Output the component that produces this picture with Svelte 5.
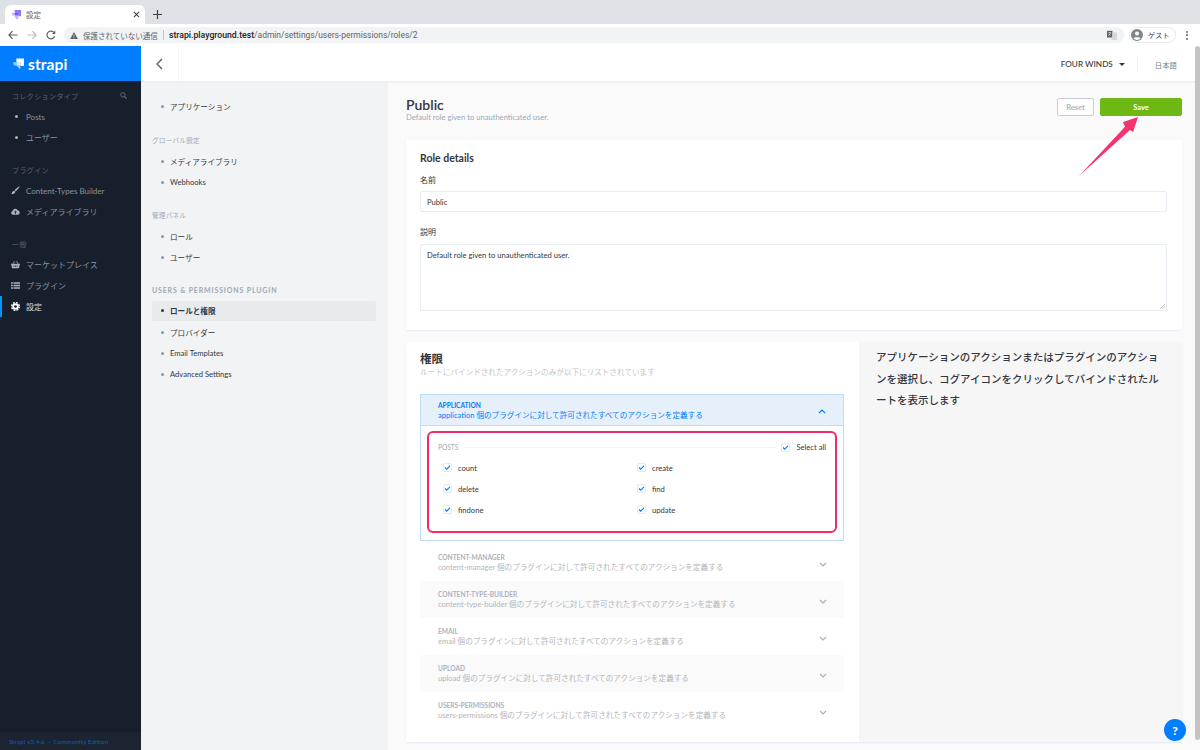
<script lang="ts">
    const sideSections = [
        { label: "コレクションタイプ", search: true, items: [
            { icon: "dot", text: "Posts" },
            { icon: "dot", text: "ユーザー" },
        ]},
        { label: "プラグイン", items: [
            { icon: "brush", text: "Content-Types Builder" },
            { icon: "cloud", text: "メディアライブラリ" },
        ]},
        { label: "一般", items: [
            { icon: "basket", text: "マーケットプレイス" },
            { icon: "list", text: "プラグイン" },
            { icon: "cog", text: "設定", active: true },
        ]},
    ];

    const navSections = [
        { items: [{ text: "アプリケーション" }] },
        { label: "グローバル設定", items: [{ text: "メディアライブラリ" }, { text: "Webhooks" }] },
        { label: "管理パネル", items: [{ text: "ロール" }, { text: "ユーザー" }] },
        { label: "USERS & PERMISSIONS PLUGIN", strong: true, items: [
            { text: "ロールと権限", active: true },
            { text: "プロバイダー" },
            { text: "Email Templates" },
            { text: "Advanced Settings" },
        ]},
    ];

    const actions = ["count", "create", "delete", "find", "findone", "update"];
    const plugins = ["content-manager", "content-type-builder", "email", "upload", "users-permissions"];
    const suffix = "個のプラグインに対して許可されたすべてのアクションを定義する";
</script>

<div class="browser">
    <div class="tabstrip">
        <div class="tab">
            <svg class="favicon" viewBox="0 0 10 10"><path d="M3 0h7v7H7V3H3z" fill="#8e75ff"/><path d="M0 3h3v3H0zM3 6h4v4H5L3 8z" fill="#c3b5ff"/><path d="M3 3h4v3H3z" fill="#6f52ee"/></svg>
            <span class="tabtitle">設定</span>
            <svg class="tabclose" viewBox="0 0 8 8"><path d="M1 1l6 6M7 1L1 7" stroke="#3c4043" stroke-width="1.2"/></svg>
        </div>
        <svg class="newtab" viewBox="0 0 10 10"><path d="M5 0v10M0 5h10" stroke="#3c4043" stroke-width="1.3"/></svg>
    </div>
    <div class="toolbar">
        <svg class="navicon" viewBox="0 0 10 10"><path d="M9.5 5H1M4.6 1.2L.9 5l3.7 3.8" fill="none" stroke="#5f6368" stroke-width="1.2"/></svg>
        <svg class="navicon" viewBox="0 0 10 10"><path d="M.5 5H9M5.4 1.2L9.1 5 5.4 8.8" fill="none" stroke="#bcbfc4" stroke-width="1.2"/></svg>
        <svg class="navicon" viewBox="0 0 10 10"><path d="M8.6 6.2A3.9 3.9 0 1 1 8 2.6" fill="none" stroke="#5f6368" stroke-width="1.2"/><path d="M9.3.6v3.3H6z" fill="#5f6368"/></svg>
        <div class="omnibox">
            <svg class="warn" viewBox="0 0 10 9"><path d="M5 0l5 9H0z" fill="#5f6368"/><path d="M5 3v3M5 7v1" stroke="#f1f3f4" stroke-width=".9"/></svg>
            <span class="insecure">保護されていない通信</span>
            <span class="omnidiv"></span>
            <span class="host">strapi.playground.test</span><span class="path">/admin/settings/users-permissions/roles/2</span>
            <svg class="translate" viewBox="0 0 12 12"><path d="M0 1h6.5v8H0z" fill="#5f6368"/><path d="M6.5 3H12v9H4.5l2-3z" fill="#d5d7da"/><path d="M1.5 3.2h3.5M3.2 2.4v.8M4.4 3.2c-.3 1.5-1.300 2.500-2.700 3.200M2 4.500c.6.900 1.400 1.500 2.600 1.900" fill="none" stroke="#fff" stroke-width=".6"/></svg>
        </div>
        <div class="guest">
            <svg class="avatar" viewBox="0 0 12 12"><circle cx="6" cy="6" r="6" fill="#80868b"/><circle cx="6" cy="4.500" r="2" fill="#fff"/><path d="M2.300 9.300c1-1.500 6.400-1.500 7.400 0a5 5 0 0 1-7.400 0z" fill="#fff"/></svg>
            <span>ゲスト</span>
        </div>
        <div class="kebab"><i></i><i></i><i></i></div>
    </div>
</div>

<div class="page">
    <aside class="sidebar">
        <div class="brand">
            <svg class="logo" viewBox="0 0 12 12"><path d="M3.700 0H12v8.300H8V4H3.700z" fill="#fff"/><path d="M0 4h3.700v3.700H1z" fill="#fff" opacity=".6"/><path d="M3.700 4H8v3.700H3.700z" fill="#fff" opacity=".85"/><path d="M3.700 7.700H8V12L4.800 9z" fill="#fff" opacity=".6"/></svg>
            <span>strapi</span>
        </div>
        <div class="sidebody">
            {#each sideSections as section}
                <div class="sidesection">
                    <div class="sidelabel">
                        <span>{section.label}</span>
                        {#if section.search}
                            <svg class="search" viewBox="0 0 8 8"><circle cx="3.300" cy="3.300" r="2.500" fill="none" stroke="#6a7180" stroke-width="1"/><path d="M5.200 5.200L7.500 7.500" stroke="#6a7180" stroke-width="1.200"/></svg>
                        {/if}
                    </div>
                    {#each section.items as item}
                        <div class="sidelink" class:active={item.active}>
                            <span class="sideicon">
                                {#if item.icon === "dot"}
                                    <i class="sidedot"></i>
                                {:else if item.icon === "brush"}
                                    <svg viewBox="0 0 10 10"><path d="M9.700.3c.4.400-3 4.600-4.300 5.700L4 4.600C5.100 3.300 9.300-.1 9.700.3zM3.500 5.200l1.300 1.300c-.2 2-2.600 2.900-4.800 2.500 1.300-.7 1-3.500 3.500-3.800z" fill="#aeb3bb"/></svg>
                                {:else if item.icon === "cloud"}
                                    <svg viewBox="0 0 11 9"><path d="M2.500 8.500A2.400 2.400 0 0 1 2 3.800 3.300 3.300 0 0 1 8.200 3 2.800 2.800 0 0 1 8.500 8.500z" fill="#aeb3bb"/><path d="M5.500 7.500V4M4 5.300l1.500-1.500L7 5.300" fill="none" stroke="#171f2c" stroke-width="1"/></svg>
                                {:else if item.icon === "basket"}
                                    <svg viewBox="0 0 11 9"><path d="M0 3.500h11v1.200h-.5L9.800 9H1.200L.5 4.700H0z" fill="#aeb3bb"/><path d="M2.500 3.500L4.200.5M8.500 3.500L6.800.5" stroke="#aeb3bb" stroke-width="1"/><path d="M3.500 5.500v2M5.500 5.500v2M7.500 5.500v2" stroke="#171f2c" stroke-width=".8"/></svg>
                                {:else if item.icon === "list"}
                                    <svg viewBox="0 0 11 9"><path d="M0 .5h2.200v2H0zM0 3.500h2.200v2H0zM0 6.500h2.200v2H0zM3 .5h8v2H3zM3 3.500h8v2H3zM3 6.500h8v2H3z" fill="#aeb3bb"/></svg>
                                {:else if item.icon === "cog"}
                                    <svg viewBox="0 0 10 10"><circle cx="5" cy="5" r="3.600" fill="#fff"/><circle cx="5" cy="5" r="4.300" fill="none" stroke="#fff" stroke-width="1.400" stroke-dasharray="2.100 1.277"/><circle cx="5" cy="5" r="1.500" fill="#171f2c"/></svg>
                                {/if}
                            </span>
                            <span>{item.text}</span>
                        </div>
                    {/each}
                </div>
            {/each}
        </div>
        <div class="version">Strapi v3.4.6 — Community Edition</div>
    </aside>

    <div class="main">
        <header class="topbar">
            <div class="back">
                <svg viewBox="0 0 7 12"><path d="M6 1L1 6l5 5" fill="none" stroke="#61666e" stroke-width="1.500"/></svg>
            </div>
            <div class="topright">
                <span class="workspace">FOUR WINDS</span>
                <span class="caret"></span>
                <span class="topdiv"></span>
                <span class="lang">日本語</span>
            </div>
        </header>

        <div class="columns">
            <nav class="settingsnav">
                {#each navSections as section}
                    <div class="navsection">
                        {#if section.label}
                            <div class="navlabel" class:strong={section.strong}>{section.label}</div>
                        {/if}
                        {#each section.items as item}
                            <div class="navlink" class:active={item.active}>
                                <i></i><span>{item.text}</span>
                            </div>
                        {/each}
                    </div>
                {/each}
            </nav>

            <main class="content">
                <div class="pagehead">
                    <div>
                        <h1>Public</h1>
                        <p>Default role given to unauthenticated user.</p>
                    </div>
                    <div class="buttons">
                        <button class="reset">Reset</button>
                        <button class="save">Save</button>
                    </div>
                </div>

                <section class="card details">
                    <h2>Role details</h2>
                    <div class="fieldlabel">名前</div>
                    <div class="input">Public</div>
                    <div class="fieldlabel second">説明</div>
                    <div class="textarea">
                        Default role given to unauthenticated user.
                        <svg class="grip" viewBox="0 0 6 6"><path d="M0 6l6-6M3 6l3-3" stroke="#9a9a9a" stroke-width=".7"/></svg>
                    </div>
                </section>

                <section class="card perms">
                    <div class="permsleft">
                        <h2>権限</h2>
                        <p class="permsub">ルートにバインドされたアクションのみが以下にリストされています</p>
                        <div class="openplugin">
                            <div class="openhead">
                                <div>
                                    <div class="plugname">APPLICATION</div>
                                    <div class="plugdesc">application {suffix}</div>
                                </div>
                                <svg class="chev" viewBox="0 0 8 5"><path d="M1 4l3-3 3 3" fill="none" stroke="#007eff" stroke-width="1.200"/></svg>
                            </div>
                            <div class="openbody">
                                <div class="callout">
                                    <div class="posthead">
                                        <span class="postname">POSTS</span>
                                        <span class="postline"></span>
                                        <span class="check"><svg viewBox="0 0 8 6"><path d="M1 3l2 2 4-4" fill="none" stroke="#007eff" stroke-width="1.300"/></svg></span>
                                        <span class="selectall">Select all</span>
                                    </div>
                                    <div class="actions">
                                        {#each actions as action}
                                            <div class="action">
                                                <span class="check"><svg viewBox="0 0 8 6"><path d="M1 3l2 2 4-4" fill="none" stroke="#007eff" stroke-width="1.300"/></svg></span>
                                                <span>{action}</span>
                                            </div>
                                        {/each}
                                    </div>
                                </div>
                            </div>
                        </div>
                        {#each plugins as plugin, i}
                            <div class="plugin" class:odd={i % 2 === 1}>
                                <div>
                                    <div class="plugname">{plugin.toUpperCase()}</div>
                                    <div class="plugdesc">{plugin} {suffix}</div>
                                </div>
                                <svg class="chev" viewBox="0 0 8 5"><path d="M1 1l3 3 3-3" fill="none" stroke="#a9adb6" stroke-width="1.200"/></svg>
                            </div>
                        {/each}
                    </div>
                    <div class="permsright">アプリケーションのアクションまたはプラグインのアクションを選択し、コグアイコンをクリックしてバインドされたルートを表示します</div>
                </section>
            </main>
        </div>
        <div class="scrollthumb"></div>
    </div>

    <svg class="arrow" viewBox="0 0 70 70"><path d="M1 64L47 14.700 45 10 60 5 55 20 52 18z" fill="#f7336f"/></svg>
    <div class="help">?</div>
</div>

<style>
    :global(body) {
        margin: 0;
        overflow: hidden;
        font-family: Lato, "Noto Sans CJK JP", sans-serif;
        font-size: 7.6px;
        color: #333740;
    }

    h1, h2, p { margin: 0; }

    .browser { height: 46px; }

    .tabstrip {
        height: 24px;
        box-sizing: border-box;
        padding: 5px 0 0 5px;
        display: flex;
        align-items: center;
        gap: 8px;
        background: #dee1e6;
    }

    .tab {
        width: 140px;
        height: 100%;
        box-sizing: border-box;
        padding: 0 5px 0 7px;
        display: flex;
        align-items: center;
        background: #fff;
        border-radius: 6px 6px 0 0;
    }

    .favicon { width: 9px; height: 9px; }
    .tabtitle { margin-left: 5px; flex: 1; font-size: 7.5px; color: #5f6368; font-family: "Noto Sans CJK JP", sans-serif; }
    .tabclose { width: 7px; height: 7px; }
    .newtab { width: 9px; height: 9px; }

    .toolbar {
        height: 22px;
        box-sizing: border-box;
        padding: 3px 12px 3px 8px;
        display: flex;
        align-items: center;
        background: #fff;
    }

    .navicon { width: 10px; height: 10px; margin-right: 9px; }

    .omnibox {
        flex: 1;
        height: 16px;
        margin-left: -1px;
        box-sizing: border-box;
        padding: 0 7px 0 6px;
        display: flex;
        align-items: center;
        background: #f1f3f4;
        border-radius: 8px;
        font-family: Roboto, "Noto Sans CJK JP", sans-serif;
        font-size: 8.7px;
    }

    .warn { width: 8px; height: 7px; margin-right: 5px; }
    .insecure { color: #5f6368; font-size: 7.5px; width: 75px; white-space: nowrap; }
    .omnidiv { width: 1px; height: 10px; margin: 0 5px; background: #bdc1c6; }
    .host { color: #202124; font-weight: 500; }
    .path { color: #5f6368; flex: 1; font-size: 8.45px; }
    .translate { width: 10px; height: 10px; }

    .guest {
        width: 47px;
        height: 16px;
        margin-left: 5px;
        box-sizing: border-box;
        padding-left: 1px;
        display: flex;
        align-items: center;
        gap: 5px;
        border: 1px solid #e8eaed;
        border-radius: 8px;
        font-size: 7.2px;
        color: #3c4043;
        font-family: "Noto Sans CJK JP", sans-serif;
    }

    .avatar { width: 12px; height: 12px; }

    .kebab { margin-left: 10px; display: flex; flex-direction: column; gap: 1.500px; }
    .kebab i { width: 2px; height: 2px; border-radius: 50%; background: #5f6368; }

    .page {
        position: relative;
        height: 704px;
        display: flex;
        overflow: hidden;
        background: #fafafb;
    }

    .sidebar {
        width: 141px;
        flex: none;
        display: flex;
        flex-direction: column;
        background: #171f2c;
        color: #aeb3bb;
        z-index: 2;
    }

    .brand {
        height: 35px;
        box-sizing: border-box;
        padding-left: 13px;
        display: flex;
        align-items: center;
        gap: 4px;
        background: #007eff;
        color: #fff;
        font-size: 15.5px;
        font-weight: 700;
        letter-spacing: .1px;
    }

    .logo { width: 11px; height: 12px; margin-top: 1px; }

    .sidebody { flex: 1; padding-top: 4px; }
    .sidesection { margin-bottom: 11px; }

    .sidelabel {
        height: 21px;
        padding: 0 14px 0 12px;
        display: flex;
        align-items: center;
        justify-content: space-between;
        color: #59606e;
        font-size: 7px;
        letter-spacing: .4px;
    }

    .search { width: 7px; height: 7px; }

    .sidelink {
        height: 21px;
        box-sizing: border-box;
        padding-left: 11px;
        display: flex;
        align-items: center;
        font-size: 8px;
        color: #8d929b;
    }

    .sidelink.active { color: #d8dade; border-left: 2px solid #0097f6; padding-left: 9px; }

    .sideicon {
        width: 15px;
        flex: none;
        display: flex;
        align-items: center;
        justify-content: flex-start;
    }

    .sideicon svg { width: 9px; height: 9px; margin-left: 0; }
    .sidedot { width: 3px; height: 3px; margin-left: 4px; border-radius: 50%; background: #aeb3bb; }

    .version {
        height: 18px;
        padding-left: 9px;
        display: flex;
        align-items: center;
        background: #1c2431;
        color: #0c5fb5;
        font-size: 6.1px;
        letter-spacing: .2px;
    }

    .main {
        position: relative;
        flex: 1;
        min-width: 0;
        display: flex;
        flex-direction: column;
    }

    .topbar {
        height: 35px;
        flex: none;
        display: flex;
        align-items: center;
        background: #fff;
        border-bottom: 2px solid #eeeff1;
    }

    .back {
        width: 37px;
        height: 100%;
        display: flex;
        align-items: center;
        justify-content: center;
        border-right: 1px solid #f3f4f4;
    }

    .back svg { width: 7px; height: 12px; }

    .topright {
        flex: 1;
        margin-top: 1px;
        padding-right: 23px;
        display: flex;
        align-items: center;
        justify-content: flex-end;
    }

    .workspace { font-size: 8.2px; font-weight: 500; color: #333740; }
    .caret { margin-left: 6px; border: 3px solid transparent; border-top: 3px solid #333740; border-bottom: 0; }
    .topdiv { width: 1px; height: 18px; margin: 0 17px 0 12px; background: #f3f4f4; }
    .lang { color: #787c83; font-size: 7.4px; }

    .columns { flex: 1; min-height: 0; display: flex; }

    .settingsnav {
        width: 247px;
        flex: none;
        box-sizing: border-box;
        padding: 13px 12px 0 11px;
        background: #f2f3f4;
    }

    .navsection { margin-bottom: 11.5px; }

    .navlabel {
        height: 22px;
        display: flex;
        align-items: center;
        font-size: 6.6px;
        color: #9ea7b8;
        letter-spacing: .25px;
    }

    .navlabel.strong { font-size: 7px; font-weight: 700; letter-spacing: .85px; height: 21px; }

    .navlink {
        height: 21px;
        box-sizing: border-box;
        padding-left: 9px;
        display: flex;
        align-items: center;
        gap: 6px;
        font-size: 7.6px;
        color: #333740;
        border-radius: 2px;
    }

    .navlink i { width: 3px; height: 3px; border-radius: 50%; background: #8e98ab; }
    .navlink.active { height: 20px; margin-bottom: 1px; background: #e9eaeb; font-weight: 700; }
    .navlink.active i { background: #333740; }

    .content {
        flex: 1;
        min-width: 0;
        box-sizing: border-box;
        padding: 13px 18px 0 18px;
    }

    .pagehead {
        height: 44px;
        display: flex;
        justify-content: space-between;
        align-items: flex-start;
    }

    h1 { font-size: 14px; line-height: 17px; font-weight: 600; color: #333740; }
    .pagehead p { margin-top: -1px; font-size: 7.6px; line-height: 10px; color: #9ea7b8; }

    .buttons { display: flex; gap: 6px; margin-top: 2px; }

    button {
        height: 18px;
        padding: 0;
        border-radius: 2px;
        font: 700 7.500px Lato, sans-serif;
    }

    .reset { width: 37px; background: #fff; border: 1px solid #c8cdd6; color: #b3b5b9; }
    .save { width: 82px; background: #6db814; border: 1px solid #6db814; color: #fff; }

    .card {
        background: #fff;
        border-radius: 2px;
        box-shadow: 0 1px 2px #e3e9f3;
    }

    .details {
        height: 190px;
        box-sizing: border-box;
        padding: 11px 15px 0 14px;
        margin-bottom: 12px;
    }

    h2 { font-size: 10.500px; line-height: 14px; font-weight: 700; color: #333740; }

    .fieldlabel { margin-top: 10px; line-height: 11px; font-size: 8px; color: #333740; }
    .fieldlabel.second { margin-top: 15px; }

    .input, .textarea {
        margin-top: 5px;
        box-sizing: border-box;
        padding: 0 6px;
        border: 1px solid #e8edf4;
        border-radius: 2px;
        font-size: 7.6px;
        color: #333740;
    }

    .input { height: 21px; display: flex; align-items: center; }
    .textarea { position: relative; height: 67px; margin-top: 6px; padding-top: 5px; line-height: 11px; }
    .grip { position: absolute; right: 1px; bottom: 1px; width: 5px; height: 5px; }

    .perms {
        height: 400px;
        display: flex;
        border-radius: 2px 2px 0 0;
    }

    .permsleft {
        width: 453px;
        flex: none;
        box-sizing: border-box;
        padding: 10px 15px 0 14px;
    }

    .permsleft h2 { font-size: 11.500px; }
    .permsub { margin-top: 0; line-height: 12px; font-size: 7.6px; color: #c3c5c8; }

    .openplugin {
        margin-top: 16px;
        height: 147px;
        box-sizing: border-box;
        border: 1px solid #bfdcfb;
    }

    .openhead {
        height: 31px;
        box-sizing: border-box;
        padding: 0 17px 0 17px;
        display: flex;
        align-items: center;
        justify-content: space-between;
        background: #e6f0fb;
        border-bottom: 1px solid #bfdcfb;
        color: #007eff;
    }

    .plugname { font-size: 6.6px; line-height: 10px; font-weight: 700; }
    .plugdesc { font-size: 7.6px; line-height: 11px; }

    .chev { width: 8px; height: 5px; margin-top: 2px; }
    .plugin .chev { margin-top: 4px; }

    .openbody { padding: 5px 6px 0 6px; }

    .callout {
        height: 102px;
        box-sizing: border-box;
        padding: 8px 9px 0 9px;
        border: 2px solid #f02a6b;
        border-radius: 6px;
    }

    .posthead { height: 12px; display: flex; align-items: center; }
    .postname { font-size: 6.600px; color: #9ea7b8; }
    .postline { flex: 1; height: 1px; margin: 0 5px 0 6px; background: #f2f3f4; }
    .selectall { margin-left: 6px; font-size: 7.6px; color: #333740; }

    .check {
        width: 9px;
        height: 9px;
        flex: none;
        display: flex;
        align-items: center;
        justify-content: center;
        box-sizing: border-box;
        border: 1px solid #e3e9f3;
        border-radius: 2px;
        background: #fff;
    }

    .check svg { width: 7px; height: 5px; }

    .actions {
        margin-top: 4px;
        padding-left: 5px;
        display: grid;
        grid-template-columns: 194px 1fr;
        grid-auto-rows: 21px;
    }

    .action { display: flex; align-items: center; gap: 6px; font-size: 7.6px; color: #333740; }

    .plugin {
        height: 37px;
        box-sizing: border-box;
        padding: 0 17px 0 18px;
        display: flex;
        align-items: center;
        justify-content: space-between;
        color: #b3b5b9;
    }

    .openplugin + .plugin { margin-top: 3px; }
    .plugin.odd { background: #fafafb; }
    .plugin .plugname { color: #aeb2bb; }

    .permsright {
        flex: 1;
        box-sizing: border-box;
        padding: 5px 17px 0 17px;
        background: #f6f6f7;
        font-size: 10.5px;
        line-height: 21.5px;
        font-weight: 500;
        color: #333740;
        word-break: break-all;
    }

    .scrollthumb {
        position: absolute;
        right: 0;
        top: 0;
        width: 5px;
        height: 694px;
        border-radius: 3px;
        background: #c4c4c4;
    }

    .arrow {
        position: absolute;
        left: 1078px;
        top: 66px;
        width: 70px;
        height: 70px;
        z-index: 3;
    }

    .help {
        position: absolute;
        left: 1164px;
        top: 673px;
        width: 22px;
        height: 22px;
        display: flex;
        align-items: center;
        justify-content: center;
        border-radius: 50%;
        background: #007eff;
        color: #fff;
        font-size: 12px;
        font-weight: 900;
        z-index: 3;
    }
</style>
